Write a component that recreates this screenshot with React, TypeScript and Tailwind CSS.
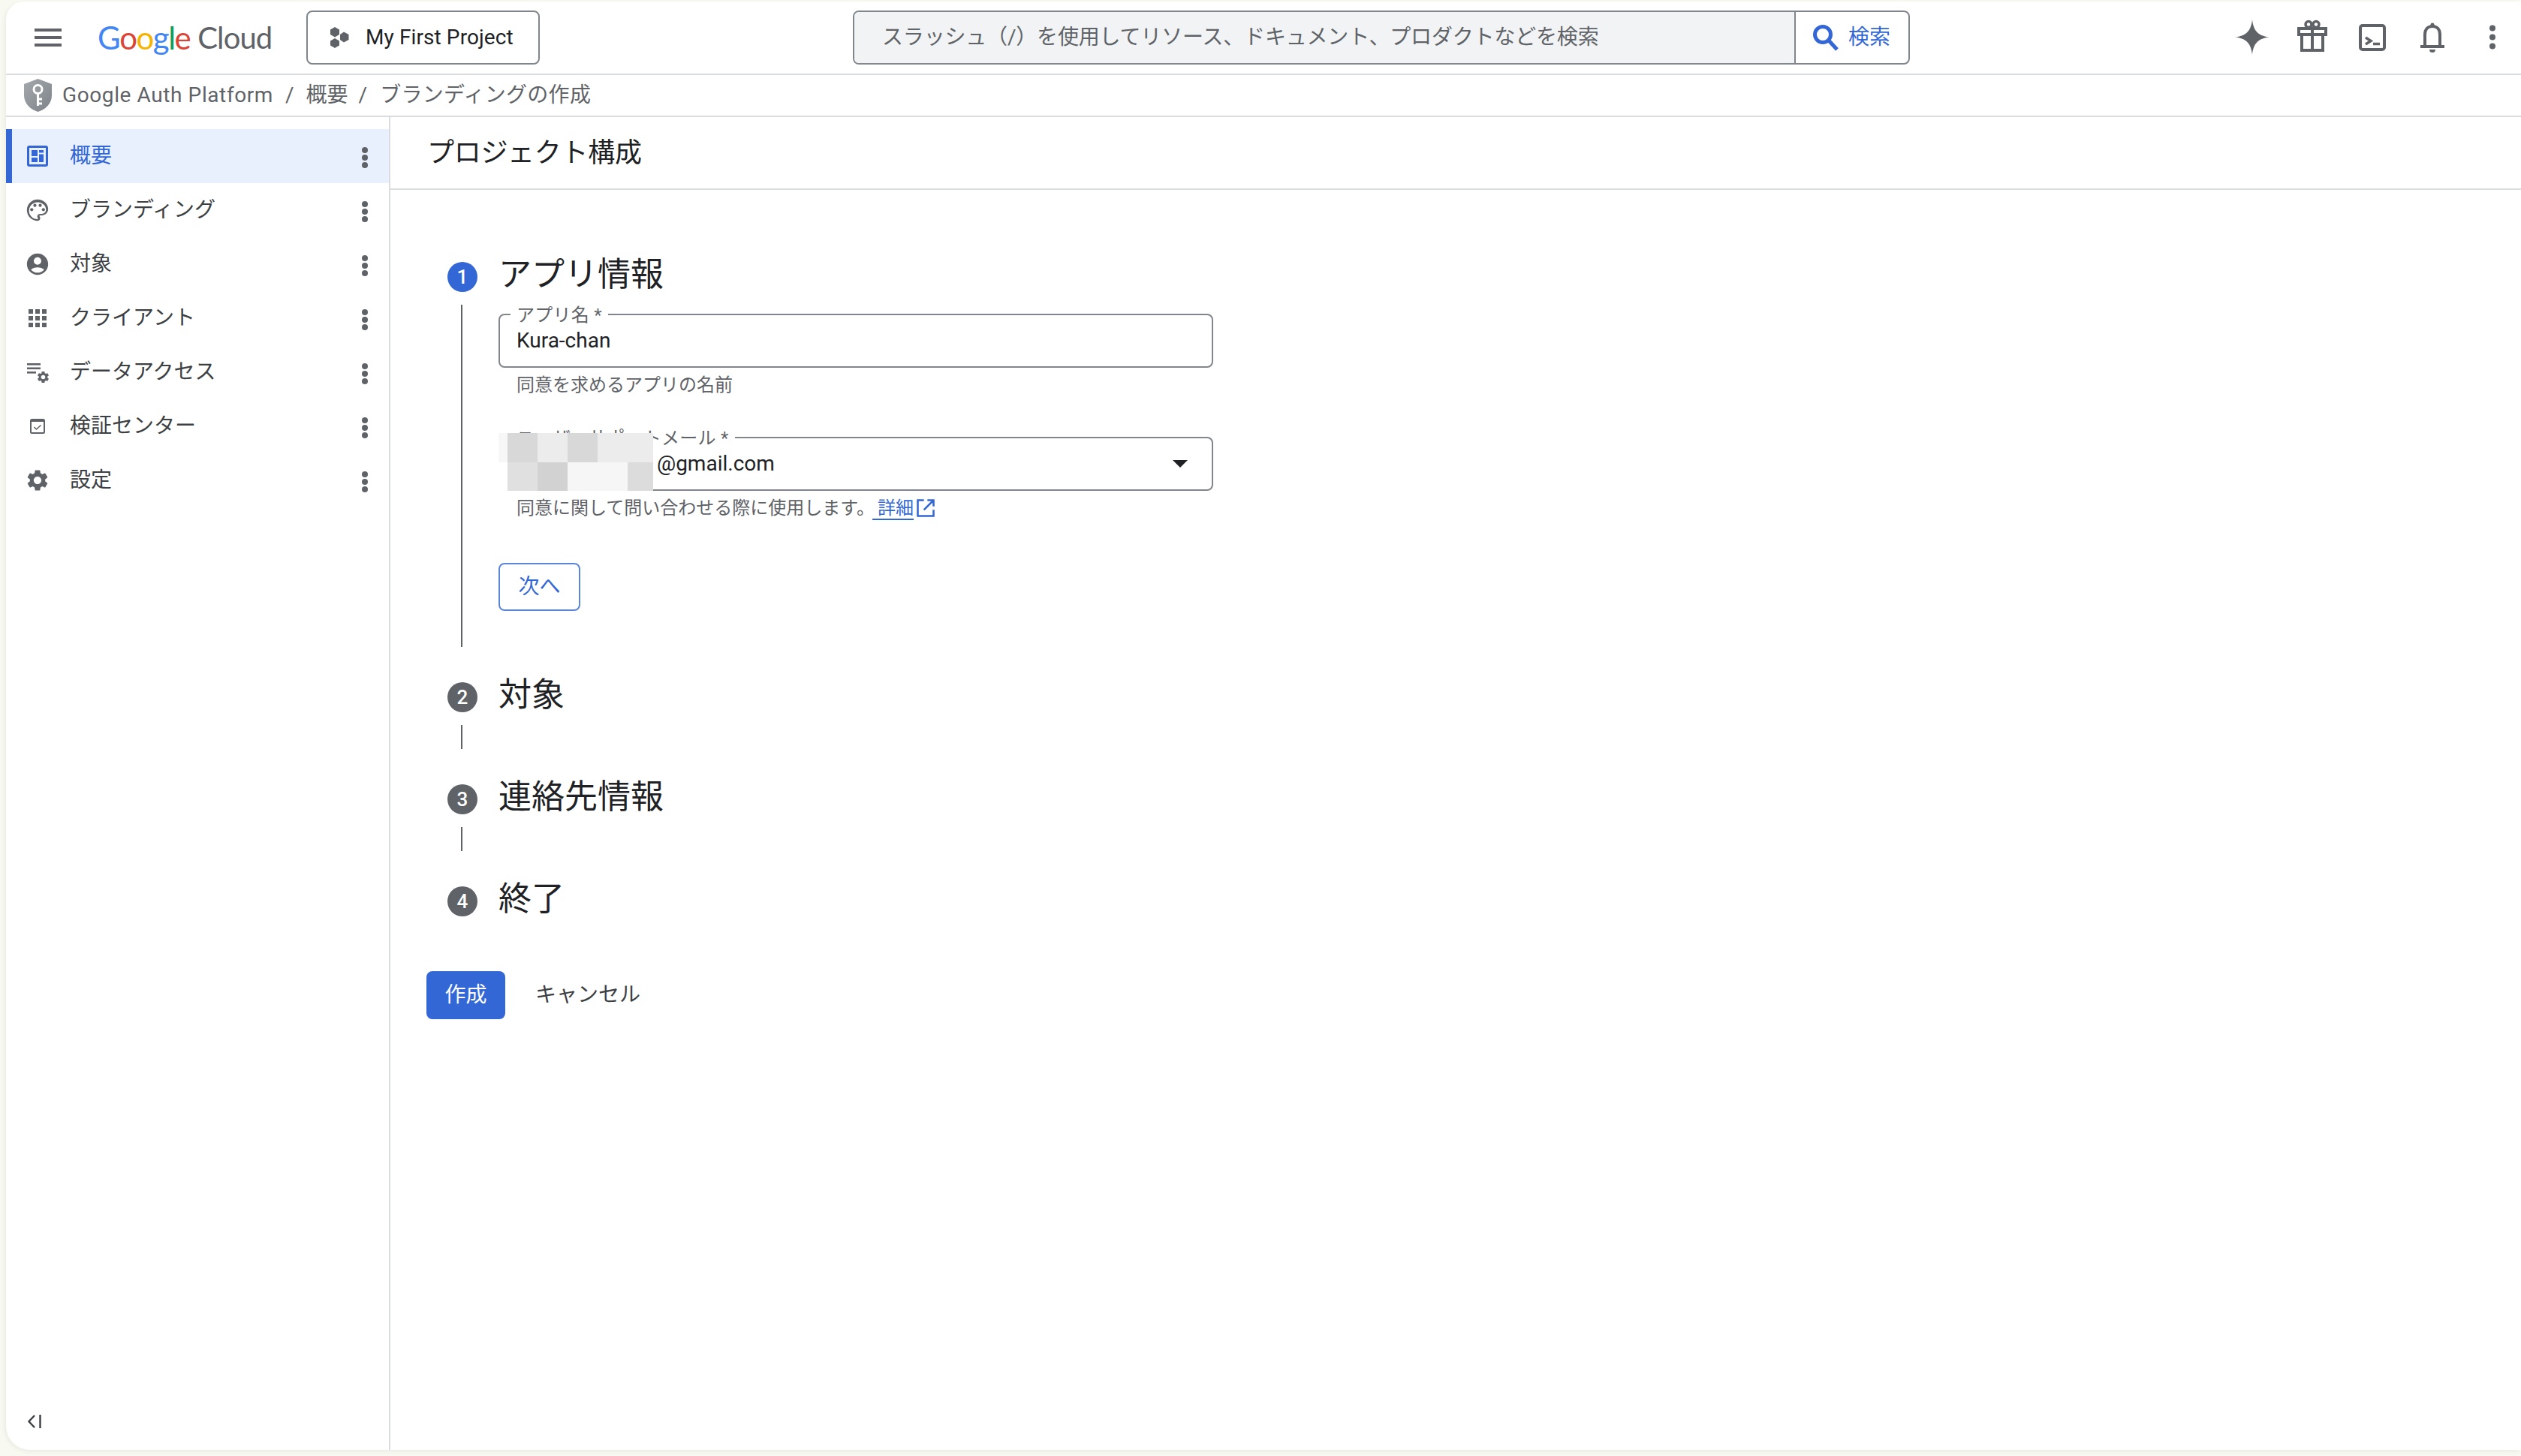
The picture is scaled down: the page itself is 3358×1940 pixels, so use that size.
import React from "react";

const navItems = [
  { label: "概要", icon: "dashboard", active: true },
  { label: "ブランディング", icon: "palette" },
  { label: "対象", icon: "person" },
  { label: "クライアント", icon: "apps" },
  { label: "データアクセス", icon: "data" },
  { label: "検証センター", icon: "check" },
  { label: "設定", icon: "gear" },
];

const GEAR =
  "M19.14 12.94c.04-.3.06-.61.06-.94 0-.32-.02-.64-.07-.94l2.03-1.58c.18-.14.23-.41.12-.61l-1.92-3.32c-.12-.22-.37-.29-.59-.22l-2.39.96c-.5-.38-1.03-.7-1.62-.94l-.36-2.54c-.04-.24-.24-.41-.48-.41h-3.84c-.24 0-.43.17-.47.41l-.36 2.54c-.59.24-1.13.57-1.62.94l-2.39-.96c-.22-.08-.47 0-.59.22L2.74 8.87c-.12.21-.08.47.12.61l2.03 1.58c-.05.3-.09.63-.09.94s.02.64.07.94l-2.03 1.58c-.18.14-.23.41-.12.61l1.92 3.32c.12.22.37.29.59.22l2.39-.96c.5.38 1.03.7 1.62.94l.36 2.54c.05.24.24.41.48.41h3.84c.24 0 .44-.17.47-.41l.36-2.54c.59-.24 1.13-.56 1.62-.94l2.39.96c.22.08.47 0 .59-.22l1.92-3.32c.12-.22.07-.47-.12-.61l-2.01-1.58zM12 15.6c-1.98 0-3.6-1.62-3.6-3.6s1.62-3.6 3.6-3.6 3.6 1.62 3.6 3.6-1.62 3.6-3.6 3.6z";

function NavIcon({ name }: { name: string }) {
  const c = "#5f6368";
  if (name === "dashboard")
    return (
      <svg viewBox="0 0 34 34" className="w-[34px] h-[34px] shrink-0">
        <rect x="3" y="3" width="28" height="28" rx="3" fill="#3367d6" />
        <rect x="6" y="6" width="22" height="22" fill="#e8f0fe" />
        <rect x="9" y="9" width="8" height="8" fill="#3367d6" />
        <rect x="19" y="9" width="6" height="3.500" fill="#3367d6" />
        <rect x="9" y="19" width="8" height="6" fill="#3367d6" />
        <rect x="19" y="14.500" width="6" height="10.500" fill="#3367d6" />
      </svg>
    );
  if (name === "palette")
    return (
      <svg viewBox="0 0 24 24" className="w-[34px] h-[34px] shrink-0" fill={c}>
        <path d="M12 2C6.49 2 2 6.49 2 12s4.49 10 10 10c1.38 0 2.5-1.12 2.5-2.5 0-.61-.23-1.2-.64-1.67-.08-.1-.13-.21-.13-.33 0-.28.22-.5.5-.5H16c3.31 0 6-2.69 6-6 0-4.96-4.49-9-10-9zm4 13.5h-1.77c-1.38 0-2.5 1.12-2.5 2.5 0 .61.22 1.19.63 1.65.06.07.14.19.14.35 0 .28-.22.5-.5.5-4.41 0-8-3.59-8-8s3.59-8 8-8 8 3.14 8 7c0 2.21-1.79 4-4 4z" />
        <circle cx="6.5" cy="11.5" r="1.5" />
        <circle cx="9.5" cy="7.5" r="1.5" />
        <circle cx="14.5" cy="7.5" r="1.5" />
        <circle cx="17.5" cy="11.5" r="1.5" />
      </svg>
    );
  if (name === "person")
    return (
      <svg viewBox="0 0 24 24" className="w-[34px] h-[34px] shrink-0" fill={c}>
        <path d="M12 2C6.48 2 2 6.48 2 12s4.48 10 10 10 10-4.48 10-10S17.52 2 12 2zm0 3.500c1.930 0 3.500 1.570 3.500 3.500S13.930 12.500 12 12.500 8.500 10.930 8.500 9 10.070 5.500 12 5.500zm0 14.500c-2.500 0-4.720-1.150-6.180-2.950C7.300 15.800 9.560 15 12 15s4.700.8 6.180 2.050C16.720 18.850 14.500 20 12 20z" />
      </svg>
    );
  if (name === "apps")
    return (
      <svg viewBox="0 0 34 34" className="w-[34px] h-[34px] shrink-0" fill={c}>
        {[5, 14, 23].flatMap((y) =>
          [5, 14, 23].map((x) => <rect key={`${x}-${y}`} x={x} y={y} width="6" height="6" />),
        )}
      </svg>
    );
  if (name === "data")
    return (
      <svg viewBox="0 0 34 34" className="w-[34px] h-[34px] shrink-0 " fill={c}>
        <rect x="3" y="5" width="18" height="2.6" />
        <rect x="3" y="10.500" width="18" height="2.600" />
        <rect x="3" y="16" width="12" height="2.600" />
        <svg x="15" y="14" width="19" height="19" viewBox="0 0 24 24">
          <path d={GEAR} />
        </svg>
      </svg>
    );
  if (name === "check")
    return (
      <svg viewBox="0 0 34 34" className="w-[34px] h-[34px] shrink-0">
        <rect x="8" y="8" width="18" height="18" rx="1.500" fill="none" stroke={c} strokeWidth="2" />
        <rect x="8" y="8" width="18" height="3" fill={c} />
        <path d="M12.500 18l3 3L21.500 15.500" fill="none" stroke={c} strokeWidth="1.600" />
      </svg>
    );
  return (
    <svg viewBox="0 0 24 24" className="w-[34px] h-[34px] shrink-0" fill={c}>
      <path d={GEAR} />
    </svg>
  );
}

function Dots() {
  return (
    <svg viewBox="0 0 8 28" className="w-[8px] h-[28px] shrink-0 mt-[4px]" fill="#5f6368">
      <circle cx="4" cy="4" r="4" />
      <circle cx="4" cy="14" r="4" />
      <circle cx="4" cy="24" r="4" />
    </svg>
  );
}

function Header() {
  return (
    <header className="h-[98px] shrink-0 flex items-start border-b-2 border-[#dadce0] pt-[12px]">
      <svg viewBox="0 0 24 24" className="w-[48px] h-[48px] ml-[32px] mt-[12px] shrink-0" fill="#5f6368">
        <path d="M3 18h18v-2H3v2zm0-5h18v-2H3v2zm0-7v2h18V6H3z" />
      </svg>
      <div className="w-[232px] ml-[42px] h-[72px] flex items-center shrink-0 whitespace-nowrap text-[42px] tracking-[-1.5px] font-[Lato,Roboto,sans-serif] leading-none">
        <span className="text-[#4285f4]">G</span>
        <span className="text-[#db4437]">o</span>
        <span className="text-[#f4b400]">o</span>
        <span className="text-[#4285f4]">g</span>
        <span className="text-[#0f9d58]">l</span>
        <span className="text-[#db4437]">e</span>
        <span className="text-[#5f6368] ml-[10px] text-[40px] tracking-[-0.9px]">Cloud</span>
      </div>
      <button className="w-[311px] h-[72px] ml-[46px] shrink-0 rounded-[8px] border-2 border-[#80868b] flex items-center pl-[28px] text-[28px] text-[#202124]">
        <svg viewBox="0 0 30 30" className="w-[30px] h-[30px] shrink-0" fill="#5f6368">
          <polygon points="8,1 14,4.500 14,11 8,14.500 2,11 2,4.500" />
          <polygon points="20,7.500 26.500,11 26.500,18 20,21.500 15,18 15,11" />
          <polygon points="8,16 14,19.500 14,25.500 8,29 2,25.500 2,19.500" />
        </svg>
        <span className="ml-[19px] whitespace-nowrap tracking-[0.1px]">My First Project</span>
      </button>
      <div className="w-[1408px] h-[72px] ml-[417px] shrink-0 rounded-[8px] border-2 border-[#80868b] flex overflow-hidden">
        <div className="flex-1 bg-[#f1f3f4] flex items-center pl-[37px] text-[28px] tracking-[-0.18px] text-[#5f6368] whitespace-nowrap">
          スラッシュ（/）を使用してリソース、ドキュメント、プロダクトなどを検索
        </div>
        <div className="w-[152px] border-l-2 border-[#80868b] flex items-center pl-[22px] text-[28px] text-[#3367d6]">
          <svg viewBox="0 0 36 36" className="w-[36px] h-[36px] shrink-0" fill="none" stroke="#3367d6">
            <circle cx="14" cy="14" r="10.500" strokeWidth="5" />
            <path d="M21.500 21.500L33 34" strokeWidth="5" />
          </svg>
          <span className="ml-[12px] whitespace-nowrap">検索</span>
        </div>
      </div>
      <div className="flex ml-[416px] shrink-0 mt-[-4px]">
        <svg viewBox="0 0 80 80" className="w-[80px] h-[80px]" fill="#5f6368">
          <path d="M40 16C41.500 31 48 38 63 39.500C48 41 41.500 48 40 63C38.500 48 32 41 17 39.500C32 38 38.500 31 40 16Z" />
        </svg>
        <svg viewBox="0 0 80 80" className="w-[80px] h-[80px]" fill="none" stroke="#5f6368" strokeWidth="4">
          <rect x="22" y="28" width="36" height="8" />
          <path d="M26 36V57H54V36" />
          <path d="M40 28V57" />
          <circle cx="35" cy="22.500" r="4" strokeWidth="3.500" />
          <circle cx="45" cy="22.500" r="4" strokeWidth="3.500" />
        </svg>
        <svg viewBox="0 0 80 80" className="w-[80px] h-[80px]" fill="none" stroke="#5f6368">
          <rect x="24" y="24" width="32" height="32" rx="3" strokeWidth="4" />
          <path d="M31 40L38 44.500L31 49" strokeWidth="3.500" />
          <path d="M41 48.500H50" strokeWidth="3.500" />
        </svg>
        <svg viewBox="0 0 80 80" className="w-[80px] h-[80px]" fill="none" stroke="#5f6368" strokeWidth="4">
          <path d="M24 52H56" />
          <path d="M30 52V36C30 29 34 25 40 25C46 25 50 29 50 36V52" />
          <circle cx="40" cy="23" r="2.500" fill="#5f6368" strokeWidth="0" />
          <path d="M36 56H44C44 59 42 60 40 60C38 60 36 59 36 56Z" fill="#5f6368" strokeWidth="0" />
        </svg>
        <svg viewBox="0 0 80 80" className="w-[80px] h-[80px]" fill="#5f6368">
          <circle cx="40" cy="27.500" r="4" />
          <circle cx="40" cy="39.500" r="4" />
          <circle cx="40" cy="51.500" r="4" />
        </svg>
      </div>
    </header>
  );
}

function Breadcrumb() {
  return (
    <div className="h-[56px] shrink-0 flex items-center border-b-2 border-[#dadce0] pl-[24px] text-[28px] text-[#5f6368] whitespace-nowrap">
      <svg viewBox="0 0 37 44" className="w-[37px] h-[44px] shrink-0">
        <defs>
          <linearGradient id="sh" x1="0" y1="0" x2="1" y2="1">
            <stop offset="0" stopColor="#a4a9ae" />
            <stop offset="1" stopColor="#7d8388" />
          </linearGradient>
        </defs>
        <path d="M18.500 0L37 7V22C37 33 29 40.500 18.500 44C8 40.500 0 33 0 22V7Z" fill="url(#sh)" />
        <circle cx="18.500" cy="14" r="5.500" fill="none" stroke="#fff" strokeWidth="3" />
        <path d="M18.500 19V36M18.500 27H24M18.500 33H24" fill="none" stroke="#fff" strokeWidth="3" />
      </svg>
      <span className="ml-[14px] tracking-[0.6px]">Google Auth Platform</span>
      <span className="ml-[16px]">/</span>
      <span className="ml-[16px]">概要</span>
      <span className="ml-[14px]">/</span>
      <span className="ml-[17px] tracking-[0.3px]">ブランディングの作成</span>
    </div>
  );
}

function Sidebar() {
  return (
    <aside className="w-[512px] shrink-0 border-r-2 border-[#dadce0] flex flex-col pt-[16px]">
      {navItems.map((n) => (
        <div
          key={n.label}
          className={
            n.active
              ? "h-[72px] flex items-center border-l-[8px] border-[#3367d6] bg-[#e8f0fe] pl-[17px] pr-[28px] text-[#3367d6]"
              : "h-[72px] flex items-center border-l-[8px] border-transparent pl-[17px] pr-[28px] text-[#3c4043]"
          }
        >
          <NavIcon name={n.icon} />
          <span className="ml-[26px] flex-1 text-[28px]">{n.label}</span>
          <Dots />
        </div>
      ))}
      <div className="mt-auto pl-[28px] pb-[28px]">
        <svg viewBox="0 0 20 20" className="w-[20px] h-[20px]" fill="none" stroke="#3c4043" strokeWidth="2.400">
          <path d="M10 2L2.500 10L10 18" />
          <path d="M17.500 1V19" />
        </svg>
      </div>
    </aside>
  );
}

function StepBadge({ n, active }: { n: number; active?: boolean }) {
  return (
    <div
      className={
        (active ? "bg-[#3367d6] " : "bg-[#5f6368] ") +
        "w-[40px] h-[40px] rounded-full shrink-0 flex items-center justify-center text-white text-[26px] font-medium"
      }
    >
      {n}
    </div>
  );
}

function StepHead({ n, title, active }: { n: number; title: string; active?: boolean }) {
  return (
    <div className="flex items-start h-[40px]">
      <StepBadge n={n} active={active} />
      <h2 className="ml-[28px] text-[44px] leading-[44px] mt-[-5px] font-normal text-[#202124] whitespace-nowrap">{title}</h2>
    </div>
  );
}

function Connector() {
  return <div className="w-[2px] h-[32px] ml-[18px] bg-[#5f6368]" />;
}

function FieldBox({ label, children }: { label: string; children: React.ReactNode }) {
  return (
    <div className="relative w-[952px] h-[72px] rounded-[8px] border-2 border-[#80868b] flex items-center pl-[22px] pr-[32px] text-[28px] text-[#202124]">
      <span className="absolute left-[14px] top-[-12px] bg-white px-[8px] text-[24px] leading-[24px] tracking-[0.25px] text-[#5f6368] whitespace-nowrap">
        {label}
      </span>
      {children}
    </div>
  );
}

const mosaic = [
  ["bg-[#f7f7f7]", "bg-[#d8d8d8]", "bg-[#ececec]", "bg-[#d8d8d8]", "bg-[#ececec]", "bg-[#ececec]"],
  ["bg-white", "bg-[#e0e0e0]", "bg-[#d2d2d2]", "bg-[#f6f6f6]", "bg-[#f6f6f6]", "bg-[#dcdcdc]"],
];

function Mosaic() {
  return (
    <div className="absolute left-0 top-[-5px] grid grid-cols-[12px_40px_40px_40px_40px_34px] grid-rows-[39px_38px]">
      {mosaic.flat().map((c, i) => (
        <div key={i} className={c} />
      ))}
    </div>
  );
}

function Main() {
  return (
    <main className="flex-1 flex flex-col min-w-0">
      <div className="h-[97px] shrink-0 flex items-center pl-[49px] border-b-2 border-[#dadce0] text-[36px] tracking-[-0.3px] text-[#202124]">
        プロジェクト構成
      </div>
      <div className="pl-[76px] pt-[96px]">
        <StepHead n={1} title="アプリ情報" active />
        <div className="flex mt-[17px]">
          <div className="w-[2px] h-[456px] ml-[18px] bg-[#5f6368] shrink-0" />
          <div className="ml-[48px] pt-[12px]">
            <FieldBox label="アプリ名 *">Kura-chan</FieldBox>
            <p className="pl-[24px] mt-[9px] text-[24px] leading-[28px] text-[#5f6368]">同意を求めるアプリの名前</p>
            <div className="relative mt-[55px]">
              <FieldBox label="ユーザーサポートメール *">
                <span className="ml-[187px] flex-1">@gmail.com</span>
                <svg viewBox="0 0 20 10" className="w-[20px] h-[10px] shrink-0" fill="#202124">
                  <path d="M0 0H20L10 10Z" />
                </svg>
              </FieldBox>
              <Mosaic />
            </div>
            <p className="flex items-start pl-[24px] mt-[9px] text-[24px] leading-[28px] text-[#5f6368]">
              同意に関して問い合わせる際に使用します。
              <span className="ml-[-3px] pl-[7px] border-b-2 border-[#3367d6] text-[#3367d6]">詳細</span>
              <svg viewBox="0 0 24 24" className="w-[28px] h-[28px] ml-[2px]" fill="none" stroke="#3367d6" strokeWidth="2.200">
                <path d="M10 3H3V21H21V14" />
                <path d="M14 3H21V10M21 3L10 14" />
              </svg>
            </p>
            <button className="mt-[57px] w-[109px] h-[64px] rounded-[8px] border-2 border-[#5b85d8] text-[28px] text-[#3367d6]">
              次へ
            </button>
          </div>
        </div>
        <div className="mt-[47px]">
          <StepHead n={2} title="対象" />
        </div>
        <div className="mt-[17px]">
          <Connector />
        </div>
        <div className="mt-[47px]">
          <StepHead n={3} title="連絡先情報" />
        </div>
        <div className="mt-[17px]">
          <Connector />
        </div>
        <div className="mt-[47px]">
          <StepHead n={4} title="終了" />
        </div>
      </div>
      <div className="flex items-center pl-[48px] mt-[73px]">
        <button className="w-[105px] h-[64px] rounded-[8px] bg-[#3367d6] text-white text-[28px]">作成</button>
        <span className="ml-[40px] text-[28px] text-[#3c4043]">キャンセル</span>
      </div>
    </main>
  );
}

export default function App() {
  return (
    <div className="w-[3358px] h-[1940px] bg-[#f8f9f1] pt-[2px] pl-[8px] pb-[8px] font-[Roboto,'Noto_Sans_CJK_JP',sans-serif] overflow-hidden">
      <div className="h-full bg-white rounded-tl-[24px] rounded-bl-[32px] shadow-[-2px_2px_6px_rgba(0,0,0,0.06)] flex flex-col overflow-hidden">
        <Header />
        <Breadcrumb />
        <div className="flex-1 flex min-h-0">
          <Sidebar />
          <Main />
        </div>
      </div>
    </div>
  );
}
